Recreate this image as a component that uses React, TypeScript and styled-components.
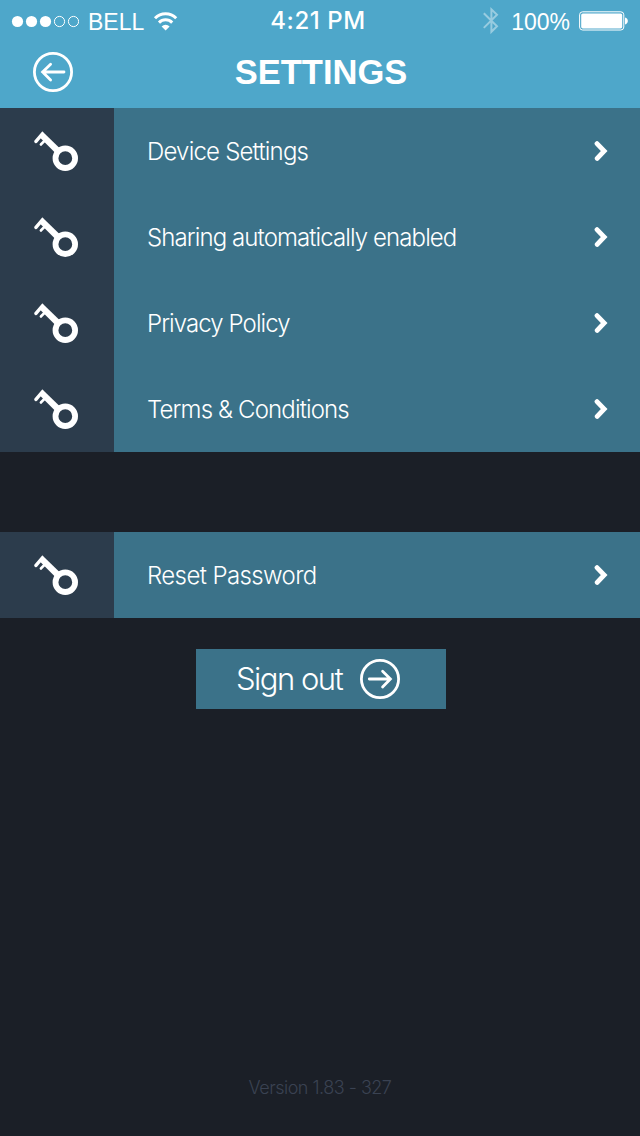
import React from 'react';
import styled, { createGlobalStyle } from 'styled-components';

const GlobalStyle = createGlobalStyle`
  * { box-sizing: border-box; }
  html, body { margin: 0; background: #1b1f27; }
  body { font-family: Inter, "Liberation Sans", Arial, sans-serif; color: #fff; }
  svg { display: block; flex: none; }
`;

const Screen = styled.main`
  display: flex;
  flex-direction: column;
  width: 640px;
  height: 1136px;
  background: #1b1f27;
`;

const Header = styled.header`
  height: 108px;
  background: #4ea7ca;
`;

const StatusBar = styled.div`
  display: grid;
  grid-template-columns: 235px 1fr 239px;
  align-items: center;
  height: 41px;
  padding: 0 11px;
`;

const StatusGroup = styled.div<{ $end?: boolean }>`
  display: flex;
  align-items: center;
  justify-content: ${p => (p.$end ? 'flex-end' : 'flex-start')};
  gap: 9px;
`;

const StatusText = styled.span`
  padding-top: 2px;
  font: 400 23px/40px "Liberation Sans", Arial, sans-serif;
  white-space: nowrap;
`;

const Clock = styled.span`
  font: 500 24px/40px Inter, sans-serif;
  letter-spacing: 0.6px;
  text-align: center;
  white-space: nowrap;
`;

const NavBar = styled.div`
  display: grid;
  grid-template-columns: 80px 1fr 78px;
  align-items: center;
  height: 62px;
  padding: 0 33px;
`;

const IconButton = styled.button`
  width: 40px;
  height: 40px;
  padding: 0;
  border: 0;
  color: inherit;
  background: none;
`;

const Title = styled.h1`
  margin: 0;
  font: 700 34.5px/62px "Liberation Sans", Arial, sans-serif;
  text-align: center;
  white-space: nowrap;
`;

const Group = styled.section<{ $gap?: number }>`
  margin-top: ${p => p.$gap ?? 0}px;
`;

const Row = styled.div`
  display: flex;
  height: 86px;
  background: #3b7289;
`;

const IconCell = styled.div`
  display: flex;
  align-items: center;
  justify-content: center;
  width: 114px;
  background: #2c3c4c;
`;

const RowBody = styled.div`
  display: flex;
  flex: 1;
  align-items: center;
  justify-content: space-between;
  padding: 0 32px 0 33px;
`;

const Label = styled.span<{ $spacing: number }>`
  padding-top: 1px;
  font-size: 24px;
  font-weight: 300;
  line-height: 30px;
  letter-spacing: ${p => p.$spacing}px;
  white-space: nowrap;
`;

const SignOut = styled.button`
  display: flex;
  align-items: center;
  align-self: center;
  justify-content: space-between;
  width: 250px;
  height: 60px;
  margin: 31px 0 0 2px;
  padding: 0 46px 0 40px;
  border: 0;
  color: #fff;
  background: #3b7289;
  font: 300 31px/60px Inter, sans-serif;
  letter-spacing: -1.5px;
  white-space: nowrap;
`;

const Version = styled.footer`
  margin-top: auto;
  padding-bottom: 36px;
  color: #3a4252;
  font-size: 18px;
  font-weight: 300;
  line-height: 24px;
  letter-spacing: -0.5px;
  text-align: center;
`;

const Signal = () => (
  <svg width="68" height="13" viewBox="0 0 68 13" fill="#fff">
    {[6.5, 20.5, 34.5].map(x => <circle key={x} cx={x} cy="6.5" r="5.6" />)}
    {[48.5, 62.5].map(x => <circle key={x} cx={x} cy="6.5" r="5.1" fill="none" stroke="#fff" />)}
  </svg>
);

const Wifi = () => (
  <svg width="25" height="19" viewBox="-.6 0 25 19" fill="none" stroke="#fff" strokeWidth="3">
    <path d="M1.4 6.2a15 15 0 0 1 21.2 0" />
    <path d="M5.4 10.6a9.3 9.3 0 0 1 13.2 0" />
    <path d="M12 18.4l-4-4a5.7 5.7 0 0 1 8 0z" fill="#fff" stroke="none" />
  </svg>
);

const BluetoothSvg = styled.svg`
  margin-right: 3px;
`;

const Bluetooth = () => (
  <BluetoothSvg width="16" height="28" viewBox="0 0 16 28" fill="none" stroke="#fff" strokeWidth="2" opacity=".42">
    <path d="M.8 6.2l13.2 13.1L8.4 24.8V2.4L14 7.8.8 20.9" />
  </BluetoothSvg>
);

const Battery = () => (
  <svg width="50" height="20" viewBox="0 0 50 20" fill="#fff">
    <rect x=".6" y=".8" width="44.2" height="18.2" rx="3" fill="none" stroke="#fff" />
    <rect x="2.2" y="2.4" width="41" height="15" rx="1.6" />
    <path d="M46 6.6c2 .5 2.8 1.8 2.8 3.4s-.8 2.9-2.8 3.4z" />
  </svg>
);

const CircleArrow = ({ right }: { right?: boolean }) => (
  <svg width="40" height="40" viewBox="0 0 40 40" fill="none" stroke="currentColor" strokeWidth="2.8" strokeLinecap="round">
    <circle cx="20" cy="20" r="18.6" />
    {right ? <path d="M9.3 20h21M22.6 12.3l7.8 7.7-7.8 7.9" /> : <path d="M31 20H9.6M17.6 12.3L9.6 20l8 7.9" />}
  </svg>
);

const Key = () => (
  <svg width="46" height="42" viewBox="0 0 46 42" fill="none" stroke="#fff">
    <circle cx="31.3" cy="28.2" r="9.8" strokeWidth="5.8" />
    <path d="M8.2 1.2L26 18.4l-4.6 4.6L5.4 7z" fill="#fff" stroke="none" />
    <path d="M8.2 4L2 11.4" strokeWidth="3.4" strokeLinecap="round" />
    <path d="M12.6 8.6L7 14.4" strokeWidth="2.8" strokeLinecap="round" />
  </svg>
);

const Chevron = () => (
  <svg width="14" height="22" viewBox="0 0 14 22" fill="none" stroke="#fff" strokeWidth="4.8" strokeLinecap="round">
    <path d="M3 3.6L10.2 11 3.2 18.4" />
  </svg>
);

const SettingRow = ({ label, spacing }: { label: string; spacing: number }) => (
  <Row>
    <IconCell><Key /></IconCell>
    <RowBody>
      <Label $spacing={spacing}>{label}</Label>
      <Chevron />
    </RowBody>
  </Row>
);

export default function App() {
  return (
    <>
      <GlobalStyle />
      <Screen>
        <Header>
          <StatusBar>
            <StatusGroup>
              <Signal />
              <StatusText>BELL</StatusText>
              <Wifi />
            </StatusGroup>
            <Clock>4:21 PM</Clock>
            <StatusGroup $end>
              <Bluetooth />
              <StatusText>100%</StatusText>
              <Battery />
            </StatusGroup>
          </StatusBar>
          <NavBar>
            <IconButton aria-label="Back"><CircleArrow /></IconButton>
            <Title>SETTINGS</Title>
          </NavBar>
        </Header>
        <Group>
          <SettingRow label="Device Settings" spacing={-0.8} />
          <SettingRow label="Sharing automatically enabled" spacing={-0.9} />
          <SettingRow label="Privacy Policy" spacing={-0.92} />
          <SettingRow label="Terms & Conditions" spacing={-0.86} />
        </Group>
        <Group $gap={80}>
          <SettingRow label="Reset Password" spacing={-0.6} />
        </Group>
        <SignOut>Sign out<CircleArrow right /></SignOut>
        <Version>Version 1.83 - 327</Version>
      </Screen>
    </>
  );
}
